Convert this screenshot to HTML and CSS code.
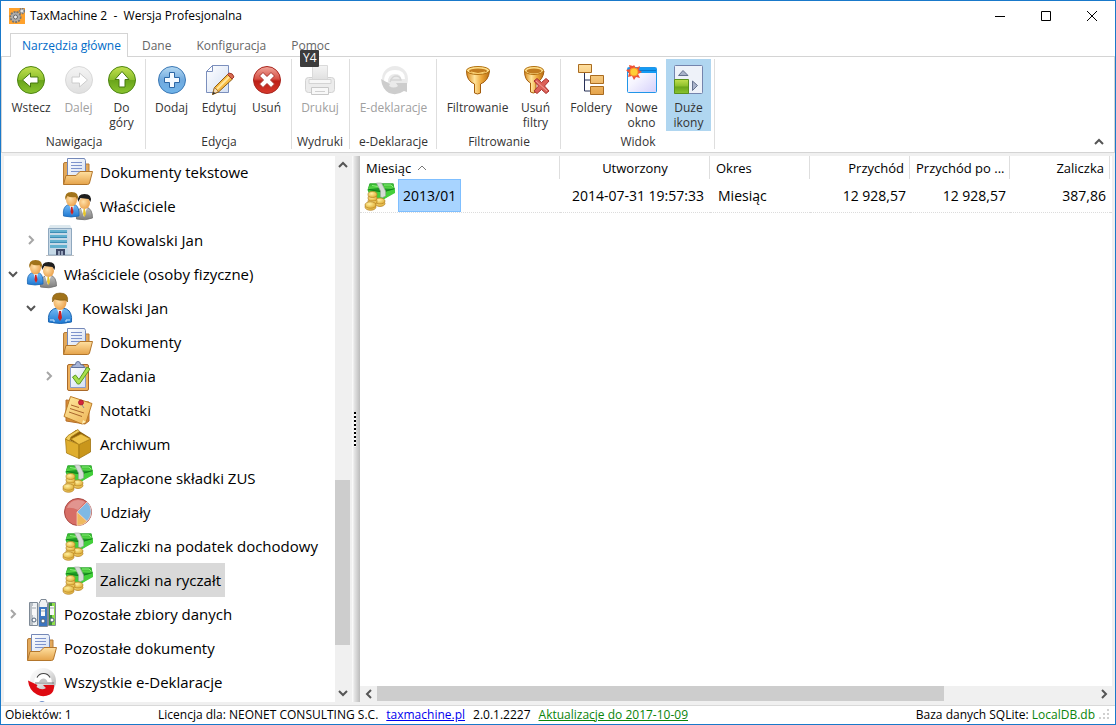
FILE: index.html
```html
<!DOCTYPE html>
<html lang="pl">
<head>
<meta charset="utf-8">
<title>TaxMachine 2 - Wersja Profesjonalna</title>
<link rel="stylesheet" href="styles.css">
</head>
<body>
<svg class="defs" aria-hidden="true">
  <defs>
    <linearGradient id="g-green" x1="0" y1="0" x2="0" y2="1"><stop offset="0" stop-color="#c2e04f"/><stop offset=".48" stop-color="#8cbf2c"/><stop offset=".52" stop-color="#6aa51a"/><stop offset="1" stop-color="#8ac42f"/></linearGradient>
    <linearGradient id="g-blue" x1="0" y1="0" x2="0" y2="1"><stop offset="0" stop-color="#b5d9f2"/><stop offset=".5" stop-color="#71aade"/><stop offset="1" stop-color="#6fb4ea"/></linearGradient>
    <linearGradient id="g-red" x1="0" y1="0" x2="0" y2="1"><stop offset="0" stop-color="#f0a79c"/><stop offset=".46" stop-color="#d75044"/><stop offset=".54" stop-color="#bd1e16"/><stop offset="1" stop-color="#d83a2c"/></linearGradient>
    <linearGradient id="g-grey" x1="0" y1="0" x2="0" y2="1"><stop offset="0" stop-color="#f4f4f4"/><stop offset="1" stop-color="#dfdfdf"/></linearGradient>
    <linearGradient id="g-gold" x1="0" y1="0" x2="1" y2="0"><stop offset="0" stop-color="#d9891d"/><stop offset=".35" stop-color="#ffe39a"/><stop offset=".65" stop-color="#eda83a"/><stop offset="1" stop-color="#b96c12"/></linearGradient>
    <linearGradient id="g-folder" x1="0" y1="0" x2="0" y2="1"><stop offset="0" stop-color="#ffe0a0"/><stop offset="1" stop-color="#e5a34a"/></linearGradient>
    <linearGradient id="g-page" x1="0" y1="0" x2="1" y2="1"><stop offset="0" stop-color="#ffffff"/><stop offset="1" stop-color="#d3dff3"/></linearGradient>
    <linearGradient id="g-window" x1="0" y1="0" x2="1" y2="1"><stop offset="0" stop-color="#ffffff"/><stop offset=".4" stop-color="#f6f5ff"/><stop offset="1" stop-color="#d5d0fb"/></linearGradient>
    <linearGradient id="g-suit" x1="0" y1="0" x2="0" y2="1"><stop offset="0" stop-color="#74baf5"/><stop offset="1" stop-color="#1c78d2"/></linearGradient>
    <linearGradient id="g-suit2" x1="0" y1="0" x2="0" y2="1"><stop offset="0" stop-color="#c2c2c2"/><stop offset="1" stop-color="#7d7d7d"/></linearGradient>
    <radialGradient id="g-face" cx=".4" cy=".4" r=".7"><stop offset="0" stop-color="#ffe0a8"/><stop offset="1" stop-color="#e99b43"/></radialGradient>
    <linearGradient id="g-note" x1="0" y1="0" x2="1" y2="1"><stop offset="0" stop-color="#ffeaa0"/><stop offset="1" stop-color="#edb255"/></linearGradient>
    <linearGradient id="g-cash" x1="0" y1="0" x2="0" y2="1"><stop offset="0" stop-color="#2fae2c"/><stop offset="1" stop-color="#5ede4a"/></linearGradient>
    <radialGradient id="g-coin" cx=".4" cy=".35" r=".7"><stop offset="0" stop-color="#fff0a0"/><stop offset="1" stop-color="#dfab30"/></radialGradient>
    <linearGradient id="g-edek" x1="0" y1="0" x2="1" y2="1"><stop offset="0" stop-color="#ffffff"/><stop offset=".4" stop-color="#ececec"/><stop offset="1" stop-color="#a8a8a8"/></linearGradient>
    <symbol id="i-docs" viewBox="0 0 32 32">
      <path d="M1.500 28V8q0-1.500 1.500-1.500h4V8h20v9z" fill="#e3a95a" stroke="#b67c38"/>
      <path d="M5.500 2.500h17l1 2V20h-18z" fill="url(#g-page)" stroke="#7488b8"/>
      <path d="M9 6.500h11M9 9.500h11M9 12.500h11M9 15.500h11" stroke="#7d93cc"/>
      <path d="M1.500 28.500L4 19.500h10l4-4h12.500l-3 11.500q-.5 1.500-2 1.500z" fill="url(#g-folder)" stroke="#b3762c"/>
    </symbol>
    <symbol id="i-man" viewBox="0 0 32 32">
      <path d="M4.500 30q-1-10 5-13l4-1h5l4 1q6 3 5 13-11 3-23 0z" fill="url(#g-suit)" stroke="#1d67b3"/>
      <path d="M13 16l3 12 3-12z" fill="#e8f3ff"/><path d="M15 19h2l1 7-2 3-2-3z" fill="#cf2121"/>
      <path d="M6 28h4v2M22 30v-2h4" stroke="#cfe8ff" fill="none"/>
      <ellipse cx="16" cy="10.500" rx="6.500" ry="7.500" fill="url(#g-face)"/>
      <path d="M8.500 10q-1.500-9 7.500-9 9 0 7.500 9l-2-2q-6 1-11-1z" fill="#a1731a" stroke="#7d560d" stroke-width=".6"/>
    </symbol>
    <symbol id="i-people" viewBox="0 0 32 32">
      <path d="M14.500 29q-1-8 3-10l4-2h3q6 2 6 11-7 3-16 1z" fill="url(#g-suit2)" stroke="#6d6d6d" stroke-width=".8"/>
      <path d="M19 18l3 9 3-9z" fill="#fff"/><path d="M21.500 19h1.500l1 5-1.500 3-1.500-3z" fill="#e7c62b"/>
      <ellipse cx="22.500" cy="13" rx="5.500" ry="6" fill="url(#g-face)"/>
      <path d="M16 12q-1-8 6.500-8 8 0 6 8l-2-3-8-1z" fill="#1e1e1e"/>
      <path d="M1.500 26q-1-9 4-11h8q4 2 3.500 11-8 2-15.500 0z" fill="url(#g-suit)" stroke="#1d67b3" stroke-width=".8"/>
      <path d="M7.500 15l2.500 10 2-10z" fill="#eef6ff"/><path d="M9 17h1.500l1 5-1.500 3-1.500-3z" fill="#cf2121"/>
      <ellipse cx="9.500" cy="10" rx="5.500" ry="6.500" fill="url(#g-face)"/>
      <path d="M3.500 10q-1.500-8 6-8 8 0 6 8l-2-3q-5 1-8-1z" fill="#a1731a"/>
    </symbol>
    <symbol id="i-building" viewBox="0 0 32 32">
      <path d="M2 31.500h28" stroke="#c4c4c4"/>
      <path d="M4 5l2-4h20l2 4z" fill="#dce8ee"/><path d="M4.500 4.500h23V31h-23z" fill="#c5d9e7" stroke="#8fa8bf"/>
      <path d="M6 6h17v3H6zm0 5h17v3H6zm0 5h17v3H6zm0 5h17v3H6z" fill="#62b1cf"/>
      <path d="M6 8h17v1H6zm0 5h17v1H6zm0 5h17v1H6z" fill="#3d8db5"/>
      <path d="M24 6h3v24h-3z" fill="#d0dbe7"/><path d="M12 25h9v6h-9z" fill="#3d4867"/><path d="M14 27h2v4h-2zm3 0h2v4h-2z" fill="#95a2ba"/>
    </symbol>
    <symbol id="i-task" viewBox="0 0 32 32">
      <rect x="5.500" y="4.500" width="21" height="26" rx="1.500" fill="#eeb05c" stroke="#a9692a"/>
      <path d="M8.500 7.500h15v20h-15z" fill="url(#g-page)" stroke="#8b9bc8"/>
      <path d="M9.500 7.500q0-3 4-3 0-3 2.500-3t2.500 3q4 0 4 3z" fill="#a9b6d8" stroke="#62739f"/>
      <path d="M10.500 17l3-2 3.500 4.500 8-12.500 3 2-10.500 15h-2z" fill="#a9e04c" stroke="#5a9a20"/>
    </symbol>
    <symbol id="i-note" viewBox="0 0 32 32">
      <path d="M4 6l23 2v19l-4 3-19-3z" fill="#d78b35" stroke="#b5702a"/>
      <path d="M8.500 2.500l21.500 7-6 19-4 1.500-18-7.500z" fill="url(#g-note)" stroke="#bd7c27"/>
      <path d="M9 11l8 2.500M8 14.500l14 4.500M7 18l13 4.500" stroke="#a9652c" fill="none"/>
      <circle cx="19" cy="8.500" r="2.500" fill="#d4243c" stroke="#9d1129" stroke-width=".7"/><path d="M20 11l2 3" stroke="#8c8c8c"/>
      <path d="M24 28l-4 2 1-4z" fill="#fff0b5"/>
    </symbol>
    <symbol id="i-box" viewBox="0 0 32 32">
      <path d="M3.500 10L14 2l4 1.500 10.500 6.500L17 17z" fill="#8a5d08"/>
      <path d="M3.500 11L17 16.500v14L4.500 25z" fill="#dfae2e" stroke="#a97c12" stroke-width=".8"/>
      <path d="M17 16.500l11.500-5.500v13L17 30.500z" fill="#c9961b" stroke="#a07310" stroke-width=".8"/>
      <path d="M3.500 11L6 7.500 16 1.500l1.500 2L9 9l-1.500 4z" fill="#f0cd5e" stroke="#a97c12" stroke-width=".8"/>
      <path d="M9 11l10-5 9.500 5L17 16.500z" fill="#efc44a" stroke="#b3851a" stroke-width=".8"/>
    </symbol>
    <symbol id="i-cash" viewBox="0 0 32 32">
      <path d="M3.500 10l2-6.500h24l1.500 8-12.500 8.500L6 15z" fill="#1c9a24"/>
      <path d="M6 3.500h23l1.500 5.500-16-1-10.500 1z" fill="url(#g-cash)"/>
      <path d="M4.500 10l14 2.500 12.500-3.500v4L18.500 20 5 15z" fill="#43cf3b"/>
      <path d="M5 9.500l13.500 2.500L30.500 8.500" fill="none" stroke="#128019" stroke-width=".9"/>
      <path d="M8 5.500l6 1M20 5h7l2 2" fill="none" stroke="#8af07a"/>
      <path d="M12.500 3h5l4 8v5l-3 1.500-2-.5v-6z" fill="#d5dbd6" stroke="#9ba59d" stroke-width=".6"/>
      <g fill="url(#g-coin)" stroke="#b58122" stroke-width=".7"><ellipse cx="16" cy="23.500" rx="5" ry="3"/><ellipse cx="16" cy="21" rx="5" ry="3"/><ellipse cx="8.500" cy="21.500" rx="4.500" ry="3"/><ellipse cx="8.500" cy="18" rx="4.500" ry="3"/><ellipse cx="8.500" cy="14.500" rx="4.500" ry="3"/><ellipse cx="6.500" cy="27" rx="5.500" ry="3.300"/><ellipse cx="6.500" cy="25" rx="5.500" ry="3.300"/></g>
    </symbol>
    <symbol id="i-pie" viewBox="0 0 32 32">
      <circle cx="16" cy="16" r="13.500" fill="#d76e66" stroke="#a94843"/>
      <path d="M15 16L25 6A13.500 13.500 0 0 1 25 25.500z" fill="#7fb9e4" stroke="#f3d4cc" stroke-width=".7"/>
      <path d="M15 16l10 9.500A13 13 0 0 1 15 29.500z" fill="#efb95f" stroke="#f6d6bf" stroke-width=".7"/>
      <path d="M5 12Q8 4 16 4q4 0 7 2l-7 8Q10 11 5 12z" fill="#fff" opacity=".27"/>
    </symbol>
    <symbol id="i-binders" viewBox="0 0 32 32">
      <path d="M3.500 4.500h8v23h-8zM13 5.500l2-4h5l1.500 4v23H13zM22.500 4.500h7v23h-7z" fill="#eef1f3" stroke="#7f8a96"/>
      <path d="M4 5h3v22H4z" fill="#bac0c6"/><path d="M13 9h8v19h-8z" fill="#3c75c1"/><path d="M23 5h3v22h-3z" fill="#398c3a"/><path d="M26 5h3v22h-3z" fill="#91df4c"/>
      <path d="M6 8h4v9H6zm9 3h4v7h-4zm9-3h4v9h-4z" fill="#f8f8f8"/><path d="M6 10h4M15 13h4M24 10h4" stroke="#9ba4ad"/>
      <g fill="#fff" stroke="#4d6179"><circle cx="8" cy="22" r="2"/><circle cx="17" cy="23" r="2"/><circle cx="26" cy="22" r="2"/></g>
    </symbol>
    <symbol id="i-edek" viewBox="0 0 32 32">
      <circle cx="17" cy="15" r="13" fill="url(#g-edek)"/>
      <path d="M8 17.500q0-10.500 9-10.500 8.500 0 9 10.500z" fill="#fff"/>
      <path d="M11 11.500q2-4 6.500-4 4.500 0 6.500 4" fill="none" stroke="#444" stroke-width="1.200"/>
      <path d="M9 17h19" stroke="#777"/>
      <path d="M13 16q1.500-3.500 4.500-3.500t4 3.500z" fill="#c4c4c4"/>
      <path d="M2 14.500l9.500 4.500-1 2q5.500 4 9.500 1l-3-3h11q.5 7-4 9.500-7 3.500-13 0Q3 24.500 2 14.500z" fill="#de0a12"/>
    </symbol>
    <symbol id="i-edek-off" viewBox="0 0 32 32">
      <circle cx="17" cy="15" r="13" fill="#eaeaea"/>
      <path d="M8 18q0-10 9-10 8 0 8 7" fill="none" stroke="#fff" stroke-width="4"/>
      <path d="M12 18q2-6 6-6 4 0 5 4H12" fill="none" stroke="#d5d5d5" stroke-width="1.500"/>
      <path d="M3 15l9 5-1 2q5 3 9 0l-2-3h11v9l-3-1q-7 5-15 2Q4 25 3 15z" fill="#cdcdcd"/>
    </symbol>
    <symbol id="i-funnel" viewBox="0 0 32 32">
      <path d="M4.500 7q0 10 8 13v9q3 2 6 0v-9q8-3 9-13z" fill="url(#g-gold)" stroke="#a35c0c"/>
      <ellipse cx="16" cy="6.500" rx="11.500" ry="4" fill="#ffdf8b" stroke="#b2700f"/>
      <ellipse cx="16" cy="7" rx="9" ry="2.500" fill="#c27c20"/><path d="M9 8q7 3 14 0" fill="none" stroke="#ffd472"/>
    </symbol>
    <symbol id="i-gear" viewBox="0 0 16 16">
      <path d="M0 0h16v16H0z" fill="#ffa22c"/>
      <circle cx="6.500" cy="9" r="5" fill="#bbb" stroke="#777" stroke-dasharray="2 1" stroke-width="2"/>
      <circle cx="6.500" cy="9" r="4" fill="#aaa"/><circle cx="6.500" cy="9" r="2" fill="#eee" stroke="#666"/>
      <circle cx="13" cy="3" r="2.500" fill="#bbb" stroke="#777" stroke-dasharray="1.500 .8" stroke-width="1.500"/><circle cx="13" cy="3" r="1" fill="#eee"/>
    </symbol>
  </defs>
</svg>

<header class="titlebar">
  <svg class="app-icon"><use href="#i-gear"/></svg>
  <h1 class="app-title">TaxMachine 2 &nbsp;-&nbsp; Wersja Profesjonalna</h1>
  <div class="window-buttons">
    <button aria-label="Minimalizuj"><svg viewBox="0 0 12 12"><path d="M1 6.500h10"/></svg></button>
    <button aria-label="Maksymalizuj"><svg viewBox="0 0 12 12"><path d="M1.500 1.500h9v9h-9z"/></svg></button>
    <button aria-label="Zamknij"><svg viewBox="0 0 12 12"><path d="M1 1l10 10M11 1L1 11"/></svg></button>
  </div>
</header>

<nav class="tabs" aria-label="Wstążka">
  <button class="tab tab-active">Narzędzia główne</button>
  <button class="tab">Dane</button>
  <button class="tab">Konfiguracja</button>
  <button class="tab">Pomoc<span class="keytip">Y4</span></button>
</nav>

<section class="ribbon" aria-label="Narzędzia główne">
  <div class="group group-first">
    <div class="tools">
      <button class="tool w-large"><svg viewBox="0 0 32 32"><circle cx="16" cy="16" r="13.500" fill="url(#g-green)" stroke="#4d8512"/><path d="M7.500 16l8-7v4h7.500v6h-7.500v4z" fill="#fff" stroke="#47780f"/></svg><span>Wstecz</span></button>
      <button class="tool w-small" disabled><svg viewBox="0 0 32 32"><circle cx="16" cy="16" r="13.500" fill="url(#g-grey)" stroke="#d9d9d9"/><path d="M24.500 16l-8-7v4H9v6h7.500v4z" fill="#fff" stroke="#ccc"/></svg><span>Dalej</span></button>
      <button class="tool w-small"><svg viewBox="0 0 32 32"><circle cx="16" cy="16" r="13.500" fill="url(#g-green)" stroke="#4d8512"/><path d="M16 7.500l7 8h-4V23h-6v-7.500H9z" fill="#fff" stroke="#47780f"/></svg><span>Do<br>góry</span></button>
    </div>
    <h2>Nawigacja</h2>
  </div>
  <div class="group">
    <div class="tools">
      <button class="tool w-small"><svg viewBox="0 0 32 32"><circle cx="16" cy="16" r="13.500" fill="url(#g-blue)" stroke="#3b78b5"/><path d="M13.500 8.500h5v5h5v5h-5v5h-5v-5h-5v-5h5z" fill="#f4faff" stroke="#2b67a6"/></svg><span>Dodaj</span></button>
      <button class="tool w-large"><svg viewBox="0 0 32 32"><path d="M9.500 1.500h16v27h-22v-21z" fill="url(#g-page)" stroke="#7b8fbd"/><path d="M3.500 7.500h6v-6z" fill="#fff" stroke="#7b8fbd"/><path d="M9.500 30.500l2-7 13-13 5 4.500-14 13z" fill="#f7bb45" stroke="#8d5d15"/><path d="M14 25l12-12" stroke="#ffe7a0" stroke-width="2"/><path d="M9.500 30.500l2-7 4 4z" fill="#f7dcb7" stroke="#8d5d15" stroke-width=".7"/><path d="M9.500 30.500l1-3 2 2z" fill="#333"/><path d="M24.500 10.500l1.500-1.500q4 0 5 4l-2 2z" fill="#d86b52" stroke="#a33b2b"/></svg><span>Edytuj</span></button>
      <button class="tool w-small"><svg viewBox="0 0 32 32"><circle cx="16" cy="16" r="13.500" fill="url(#g-red)" stroke="#a8241d"/><path d="M12 8.500l4 4 4-4 3.500 3.500-4 4 4 4-3.500 3.500-4-4-4 4L8.500 20l4-4-4-4z" fill="#fff" stroke="#a8322b"/></svg><span>Usuń</span></button>
    </div>
    <h2>Edycja</h2>
  </div>
  <div class="group group-narrow">
    <div class="tools">
      <button class="tool w-large" disabled><svg viewBox="0 0 32 32"><rect x="1.500" y="13.500" width="29" height="15" rx="3" fill="#ececec" stroke="#d2d2d2"/><path d="M8.500 16.500v-15h15v15z" fill="url(#g-grey)" stroke="#dadada"/><path d="M5 15.500h22v4H5z" fill="#f7f7f7" stroke="#d4d4d4"/><path d="M7.500 23.500h17v7h-17z" fill="#f8f8f8" stroke="#c8c8c8"/><path d="M11 27.500h10" stroke="#d0d0d0"/></svg><span>Drukuj</span></button>
    </div>
    <h2>Wydruki</h2>
  </div>
  <div class="group">
    <div class="tools">
      <button class="tool w-wide" disabled><svg viewBox="0 0 32 32"><use href="#i-edek-off"/></svg><span>E-deklaracje</span></button>
    </div>
    <h2>e-Deklaracje</h2>
  </div>
  <div class="group">
    <div class="tools">
      <button class="tool w-xlarge"><svg viewBox="0 0 32 32"><use href="#i-funnel"/></svg><span>Filtrowanie</span></button>
      <button class="tool w-small"><svg viewBox="0 0 32 32"><path d="M4.500 7q0 9 6 12v9q3 2 5.500 0v-9q7-3 8-12z" fill="url(#g-gold)" stroke="#a35c0c"/><ellipse cx="14" cy="6.500" rx="9.500" ry="4" fill="#ffdf8b" stroke="#b2700f"/><ellipse cx="14" cy="7" rx="7.500" ry="2.500" fill="#c27c20"/><path d="M14 17l3-2.500 4.500 4 4.500-4 3 2.500-4.500 5 4.500 5-3 2.500-4.500-4-4.500 4-3-2.500 4.500-5z" fill="#dc6158" stroke="#a93330"/><path d="M16 17l11 10" stroke="#f1a299"/></svg><span>Usuń<br>filtry</span></button>
    </div>
    <h2>Filtrowanie</h2>
  </div>
  <div class="group">
    <div class="tools">
      <button class="tool w-large"><svg viewBox="0 0 32 32"><path d="M9.500 9v18H16M9.500 16H16" fill="none" stroke="#273057"/><path d="M3.500.5h13v8h-13zM15.500 11.500h13v8h-13zM15.500 22.500h13v8h-13z" fill="url(#g-folder)" stroke="#a96b20"/></svg><span>Foldery</span></button>
      <button class="tool w-medium"><svg viewBox="0 0 32 32"><rect x="1.500" y="3.500" width="29" height="25" rx="1" fill="url(#g-window)" stroke="#2196e8"/><path d="M2 4h28v5H2z" fill="#149bf4"/><path d="M2 6h28v1H2z" fill="#0877cb"/><path d="M8 1l2 3 4-2-1 4 3 2-4 2 2 4-4-1-2 3-2-4-4 1 1-4-3-3 4-1-1-4 4 1z" fill="#ef5337"/><circle cx="8" cy="8" r="4" fill="#ffce36" stroke="#f99b29"/></svg><span>Nowe<br>okno</span></button>
      <button class="tool tool-on w-base" aria-pressed="true"><svg viewBox="0 0 32 32"><rect x="1.500" y="1.500" width="28" height="28" rx="1" fill="#eef2f9" stroke="#7484ad"/><path d="M5.500 11.500l4.500-5 5 5zM19.500 17l5 4.500-5 5z" fill="#a9b3ca" stroke="#65728e"/><path d="M1.500 15.500h14v14h-14z" fill="url(#g-green)" stroke="#59921c"/></svg><span>Duże<br>ikony</span></button>
    </div>
    <h2>Widok</h2>
  </div>
  <button class="collapse" aria-label="Zwiń wstążkę"><svg class="chevron" viewBox="0 0 10 10"><path d="M1 7l4-4 4 4"/></svg></button>
</section>

<main class="workspace">
  <aside class="tree-pane">
    <ul class="tree">
      <li class="level-2"><span class="twisty"></span><svg><use href="#i-docs"/></svg><span class="label">Dokumenty tekstowe</span></li>
      <li class="level-2"><span class="twisty"></span><svg><use href="#i-people"/></svg><span class="label">Właściciele</span></li>
      <li class="level-1"><button class="twisty closed" aria-label="Rozwiń"><svg class="chevron" viewBox="0 0 10 10"><path d="M3 1l4 4-4 4"/></svg></button><svg><use href="#i-building"/></svg><span class="label">PHU Kowalski Jan</span></li>
      <li class="level-0"><button class="twisty" aria-label="Zwiń"><svg class="chevron" viewBox="0 0 10 10"><path d="M1 3l4 4 4-4"/></svg></button><svg><use href="#i-people"/></svg><span class="label">Właściciele (osoby fizyczne)</span></li>
      <li class="level-1"><button class="twisty" aria-label="Zwiń"><svg class="chevron" viewBox="0 0 10 10"><path d="M1 3l4 4 4-4"/></svg></button><svg><use href="#i-man"/></svg><span class="label">Kowalski Jan</span></li>
      <li class="level-2"><span class="twisty"></span><svg><use href="#i-docs"/></svg><span class="label">Dokumenty</span></li>
      <li class="level-2"><button class="twisty closed" aria-label="Rozwiń"><svg class="chevron" viewBox="0 0 10 10"><path d="M3 1l4 4-4 4"/></svg></button><svg><use href="#i-task"/></svg><span class="label">Zadania</span></li>
      <li class="level-2"><span class="twisty"></span><svg><use href="#i-note"/></svg><span class="label">Notatki</span></li>
      <li class="level-2"><span class="twisty"></span><svg><use href="#i-box"/></svg><span class="label">Archiwum</span></li>
      <li class="level-2"><span class="twisty"></span><svg><use href="#i-cash"/></svg><span class="label">Zapłacone składki ZUS</span></li>
      <li class="level-2"><span class="twisty"></span><svg><use href="#i-pie"/></svg><span class="label">Udziały</span></li>
      <li class="level-2"><span class="twisty"></span><svg><use href="#i-cash"/></svg><span class="label">Zaliczki na podatek dochodowy</span></li>
      <li class="level-2"><span class="twisty"></span><svg><use href="#i-cash"/></svg><span class="label label-selected">Zaliczki na ryczałt</span></li>
      <li class="level-0"><button class="twisty closed" aria-label="Rozwiń"><svg class="chevron" viewBox="0 0 10 10"><path d="M3 1l4 4-4 4"/></svg></button><svg><use href="#i-binders"/></svg><span class="label">Pozostałe zbiory danych</span></li>
      <li class="level-0"><span class="twisty"></span><svg><use href="#i-docs"/></svg><span class="label">Pozostałe dokumenty</span></li>
      <li class="level-0"><span class="twisty"></span><svg><use href="#i-edek"/></svg><span class="label">Wszystkie e-Deklaracje</span></li>
      <li class="level-0"><span class="twisty"></span><svg viewBox="0 0 32 32"><path d="M12 3q4-4 8 0z" fill="#6f8fcb"/></svg></li>
    </ul>
  </aside>
  <div class="vscroll">
    <button aria-label="W górę"><svg class="chevron" viewBox="0 0 10 10"><path d="M1 7l4-4 4 4"/></svg></button>
    <div class="vtrack"><div class="vthumb"></div></div>
    <button aria-label="W dół"><svg class="chevron" viewBox="0 0 10 10"><path d="M1 3l4 4 4-4"/></svg></button>
  </div>
  <div class="splitter"><div class="grip"></div></div>
  <section class="list-pane">
    <div class="list">
      <table>
        <colgroup><col class="col-month"><col class="col-date"><col class="col-std"><col class="col-std"><col class="col-std"><col class="col-std"><col></colgroup>
        <thead>
          <tr><th>Miesiąc <svg class="sort" viewBox="0 0 10 10"><path d="M1 7l4-4 4 4"/></svg></th><th class="center">Utworzony</th><th>Okres</th><th class="num">Przychód</th><th class="num">Przychód po ...</th><th class="num">Zaliczka</th><td class="rest"></td></tr>
        </thead>
        <tbody>
          <tr><td class="name"><div class="name-cell"><svg><use href="#i-cash"/></svg><span class="picked">2013/01</span></div></td><td class="date">2014-07-31 19:57:33</td><td>Miesiąc</td><td class="num">12 928,57</td><td class="num">12 928,57</td><td class="num">387,86</td><td class="rest"></td></tr>
        </tbody>
      </table>
    </div>
    <div class="hscroll">
      <button aria-label="W lewo"><svg class="chevron" viewBox="0 0 10 10"><path d="M7 1L3 5l4 4"/></svg></button>
      <div class="htrack"><div class="hthumb"></div></div>
      <button aria-label="W prawo"><svg class="chevron" viewBox="0 0 10 10"><path d="M3 1l4 4-4 4"/></svg></button>
    </div>
  </section>
</main>

<footer class="status">
  <span class="count">Obiektów: 1</span>
  <span>Licencja dla: NEONET CONSULTING S.C.</span>
  <a href="#">taxmachine.pl</a>
  <span>2.0.1.2227</span>
  <a href="#" class="update">Aktualizacje do 2017-10-09</a>
  <span class="database">Baza danych SQLite: <span class="db-name">LocalDB.db</span></span>
  <svg class="resize" viewBox="0 0 12 12"><path d="M8 0h2v2H8zM4 4h2v2H4zM8 4h2v2H8zM0 8h2v2H0zM4 8h2v2H4zM8 8h2v2H8z"/></svg>
</footer>
</body>
</html>
```
FILE: styles.css
```css
* { box-sizing: border-box; }

body {
  margin: 0;
  height: 100vh;
  display: flex;
  flex-direction: column;
  overflow: hidden;
  border: 1px solid #1979ca;
  background: #fff;
  color: #111;
  font: 12px/15px "Open Sans", "Noto Sans", sans-serif;
}

button {
  margin: 0;
  padding: 0;
  border: 0;
  background: none;
  color: inherit;
  font: inherit;
}

svg { flex: none; }
.defs { position: absolute; width: 0; height: 0; }

.chevron {
  width: 10px;
  height: 10px;
  display: block;
  fill: none;
  stroke: #555;
  stroke-width: 2;
}

/* Title bar */
.titlebar { display: flex; align-items: center; height: 32px; padding: 0 0 3px 8px; }
.app-icon { width: 16px; height: 16px; }
.app-title { margin: 0 auto 0 5px; font-size: 12px; font-weight: 400; color: #000; }
.window-buttons { display: flex; height: 28px; }
.window-buttons button { width: 46px; display: flex; align-items: center; justify-content: center; }
.window-buttons svg { width: 12px; height: 12px; fill: none; stroke: #000; }

/* Tabs */
.tabs {
  display: flex;
  height: 24px;
  padding-left: 9px;
  border-bottom: 1px solid #d4d4d4;
}
.tab { position: relative; height: 24px; padding: 0 11px 0 14px; color: #666; }
.tab-active {
  padding: 0 6px 0 11px;
  border: 1px solid #d4d4d4;
  border-bottom: 0;
  background: #fff;
  color: #006cc8;
}
.keytip {
  position: absolute;
  left: 23px;
  top: 17px;
  z-index: 1;
  width: 19px;
  height: 17px;
  border-radius: 1px;
  background: #3c3c3c;
  color: #fff;
  text-align: center;
}

/* Ribbon */
.ribbon {
  display: flex;
  padding: 2px 0 3px;
  border: 1px solid #d4d4d4;
  border-top: 0;
  color: #333;
}
.group {
  display: flex;
  flex-direction: column;
  justify-content: space-between;
  height: 90px;
  padding: 0 3px 0 4px;
  border-right: 1px solid #dedede;
}
.group-first { padding: 0 2px 0 3px; }
.group-narrow { padding: 0 3px 0 2px; }
.group h2 { margin: 0; font-size: 12px; font-weight: 400; text-align: center; white-space: nowrap; }
.tools { display: flex; height: 72px; }
.tool { display: flex; flex-direction: column; align-items: center; padding-top: 5px; }
.tool svg { width: 32px; height: 32px; margin-bottom: 4px; }
.tool:disabled { color: #a0a0a0; }
.tool-on { background: #b0d6f0; }
.w-small { width: 43px; }
.w-base { width: 45px; }
.w-medium { width: 49px; }
.w-large { width: 52px; }
.w-xlarge { width: 73px; }
.w-wide { width: 79px; }
.collapse { align-self: flex-end; margin-left: auto; padding: 0 10px 2px; }

/* Workspace */
.workspace { flex: 1; min-height: 0; display: flex; padding: 0 3px; border: solid #f0f0f0; border-width: 3px 0; background: #f0f0f0; }
.tree-pane { flex: 0 0 331px; overflow: hidden; background: #fff; }
.tree { margin: -1px 0 0; padding: 0; list-style: none; font-size: 15px; color: #000; }
.tree li { display: flex; align-items: center; height: 34px; }
.tree li > svg { width: 32px; height: 32px; margin: 0 2px 0 4px; }
.level-1 { padding-left: 18px; }
.level-2 { padding-left: 36px; }
.twisty { width: 18px; height: 18px; display: flex; align-items: center; justify-content: center; }
.closed .chevron { stroke: #a6a6a6; }
.label { padding: 0 4px; line-height: 34px; white-space: nowrap; }
.label-selected { background: #d9d9d9; }

.vscroll { width: 15px; display: flex; flex-direction: column; }
.vscroll button { height: 18px; display: flex; align-items: center; justify-content: center; }
.vtrack { flex: 1; display: flex; flex-direction: column; justify-content: flex-end; padding-bottom: 39px; }
.vthumb { height: 35%; background: #cdcdcd; }

.splitter {
  width: 10px;
  display: flex;
  align-items: center;
  justify-content: center;
  padding-right: 2px;
  border-left: 2px solid #f0f0f0;
  background: linear-gradient(to right, #fff, #e4e4e4 30%, #bcbcbc);
}
.grip {
  width: 2px;
  height: 35px;
  background: repeating-linear-gradient(#000 0 2px, #fff 2px 4px);
}

.list-pane { flex: 1; min-width: 0; display: flex; flex-direction: column; }
.list { flex: 1; overflow: hidden; background: #fff; }
table { width: 100%; table-layout: fixed; border-collapse: separate; border-spacing: 0; color: #000; }
.col-month { width: 200px; }
.col-date { width: 150px; }
.col-std { width: 100px; }
th {
  height: 23px;
  padding: 2px 5px 0 6px;
  border-right: 1px solid #dedede;
  font-size: 13px;
  font-weight: 400;
  text-align: left;
  white-space: nowrap;
}
th.center { text-align: center; }
th.num { text-align: right; }
.sort { width: 10px; height: 10px; margin-left: 2px; fill: none; stroke: #777; }
td { padding: 0 4px 0 8px; white-space: nowrap; }
tbody td { height: 34px; border-bottom: 1px dotted #dcdcdc; font-size: 14px; }
td.num { padding-left: 0; text-align: right; }
td.date { padding: 0 6px 0 0; text-align: right; }
td.name { padding: 0 4px; }
td.rest { padding: 0; }
.name-cell { display: flex; align-items: center; }
.name-cell svg { width: 32px; height: 32px; margin-right: 2px; }
.picked { padding: 0 4px; border: 1px solid #7fbfff; background: #a8d4ff; line-height: 31px; }

.hscroll { display: flex; height: 16px; }
.hscroll button { width: 17px; display: flex; align-items: center; justify-content: center; }
.htrack { flex: 1; }
.hthumb { width: 79%; height: 15px; background: #cdcdcd; }

/* Status bar */
.status {
  display: flex;
  align-items: center;
  gap: 8px;
  height: 19px;
  padding: 0 4px 1px;
  border-top: 1px solid #d9d9d9;
  color: #000;
  white-space: nowrap;
}
.status a { color: #00e; }
.status a.update, .db-name { color: #0a840a; }
.count { width: 145px; }
.database { margin-left: auto; }
.resize { width: 12px; height: 12px; margin-left: -4px; fill: #d0d0d0; }
```
